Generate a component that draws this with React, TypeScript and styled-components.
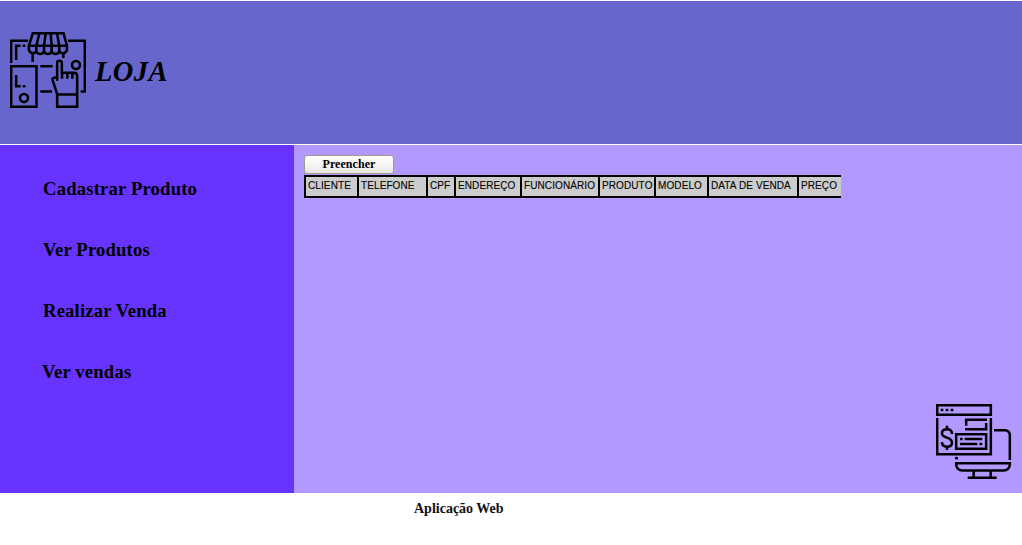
import React from "react";
import styled, { createGlobalStyle } from "styled-components";

const GlobalStyle = createGlobalStyle`
  * { box-sizing: border-box; }
  body { margin: 0; background: #fff; color: #000; font-family: "Liberation Serif", "Times New Roman", serif; }
`;

const Page = styled.div`
  height: 545px;
  padding-top: 1px;
  display: flex;
  flex-direction: column;
  overflow: hidden;
`;

const Header = styled.header`
  height: 143px;
  flex: none;
  background: #6666cc;
  display: flex;
  align-items: center;
  gap: 9px;
  padding: 0 10px 5px;
`;

const Title = styled.h1`
  margin: 4px 0 0;
  font-size: 28.5px;
  line-height: 34px;
  font-style: italic;
  letter-spacing: 0.4px;
`;

const Icon = styled.svg`
  width: 76px;
  height: 76px;
  flex: none;
  fill: none;
  stroke: #000;
  stroke-width: 7.6;
`;

const Body = styled.div`
  height: 348px;
  flex: none;
  margin-top: 1px;
  display: flex;
`;

const Sidebar = styled.nav`
  width: 294px;
  background: #6633ff;
  padding: 33px 0 0 43px;
  display: flex;
  flex-direction: column;
  gap: 39px;
`;

const MenuLink = styled.a<{ $shift?: number }>`
  font-size: 18.72px;
  line-height: 22px;
  font-weight: bold;
  letter-spacing: 0.15px;
  white-space: nowrap;
  margin-left: ${(p) => p.$shift ?? 0}px;
`;

const Main = styled.main`
  flex: 1;
  background: #b399ff;
  padding: 10px 10px 13px;
  display: flex;
  flex-direction: column;
  align-items: flex-start;
`;

const Button = styled.button`
  width: 90px;
  height: 19px;
  padding: 0;
  border: 1px solid #a39a8c;
  border-radius: 3px;
  background: linear-gradient(#fff, #f5f5f5 50%, #e6e6e6);
  font: bold 12px/17px "Liberation Serif", serif;
  letter-spacing: 0.06px;
  color: #000;
`;

const Table = styled.div`
  display: flex;
  height: 23px;
  margin-top: 1px;
  border: solid #000;
  border-width: 2px 0;
  background: #ccc;
`;

const HeadCell = styled.div<{ $width: number }>`
  width: ${(p) => p.$width}px;
  border-left: 2px solid #000;
  padding: 2px 0 0 2px;
  font: 10px/13px "Liberation Sans", Arial, sans-serif;
  letter-spacing: 0.1px;
  white-space: nowrap;
  -webkit-text-stroke: 0.1px #000;
`;

const Corner = styled.div`
  margin-top: auto;
  align-self: flex-end;
  display: flex;
`;

const Footer = styled.footer`
  padding: 7px 0 0 414px;
  font-size: 14px;
  line-height: 17px;
  font-weight: bold;
  color: #111;
`;

const columns: [string, number][] = [
  ["CLIENTE", 53],
  ["TELEFONE", 69],
  ["CPF", 28],
  ["ENDEREÇO", 66],
  ["FUNCIONÁRIO", 78],
  ["PRODUTO", 56],
  ["MODELO", 53],
  ["DATA DE VENDA", 90],
  ["PREÇO", 44],
];

const ShopIcon = () => (
  <Icon viewBox="30 36 228 228">
    <path d="M33.500 129V62.500H84M204 62.500H254.500V214.500H242" />
    <path d="M48.500 120V77.500H62M68 77.500H76" />
    <path d="M98.500 39.500H190.500L201 78V88A13 13 0 0 1 178 95A13 13 0 0 1 155 95A13 13 0 0 1 132 95A13 13 0 0 1 109 95A13 13 0 0 1 86.500 88V78Z" />
    <path d="M86 77.500H202M109 94V78L118 40M132 94V78L137 40M155 94V78L152 40M178 94V78L171 40" />
    <path d="M98 100V126M190 100V114" />
    <path d="M33.500 138.500H109.500V260.500H33.500Z" />
    <path d="M48.500 165V198.500H62M68 198.500H76" />
    <circle cx="72" cy="234" r="12" />
    <circle cx="228" cy="135" r="12" />
    <path d="M121 138.500H158M121 214.500H156" />
    <path d="M171.500 260V222L158 181Q156 174 163 173L171.500 171M171.500 182V129Q171.500 122.500 178.500 122.500T185.500 129V158.500H222Q231.500 159 231.500 168V260.500H168M168 223.500H232M186 158V176M202 158V176M217 158V176" />
  </Icon>
);

const CheckoutIcon = () => (
  <Icon viewBox="33 27 228 228">
    <path d="M36.500 30.500H197.500V59.500H36.500Z" />
    <path d="M47 45H55M62 45H70M77 45H85" />
    <path d="M36.500 69V177.500H197.500V69" />
    <path d="M123.500 92V74.500H186M120 102.500H183.500V84" />
    <path d="M93.500 117.500H183.500V161.500H93.500Z" />
    <path d="M105 132H113M119 132H172M105 147H157M163 147H172" />
    <path d="M81 117Q81 103 66 103Q51 103 51 115Q51 124 66 128Q81 133 81 143Q81 155 66 155Q51 155 51 141M66 92V104M66 154V165" />
    <path d="M207 105.500H239Q254.500 106 254.500 121V195" />
    <path d="M90 189.500H99" />
    <path d="M93.500 204.500H254.500V209Q252 226.500 236 226.500H112Q96 226.500 93.500 209Z" />
    <path d="M146 228V247M197 228V247M128 248.500H215" />
  </Icon>
);

export default function App() {
  return (
    <Page>
      <GlobalStyle />
      <Header>
        <ShopIcon />
        <Title>LOJA</Title>
      </Header>
      <Body>
        <Sidebar>
          <MenuLink>Cadastrar Produto</MenuLink>
          <MenuLink>Ver Produtos</MenuLink>
          <MenuLink>Realizar Venda</MenuLink>
          <MenuLink $shift={-1}>Ver vendas</MenuLink>
        </Sidebar>
        <Main>
          <Button>Preencher</Button>
          <Table>
            {columns.map(([label, width]) => (
              <HeadCell key={label} $width={width}>{label}</HeadCell>
            ))}
          </Table>
          <Corner>
            <CheckoutIcon />
          </Corner>
        </Main>
      </Body>
      <Footer>Aplicação Web</Footer>
    </Page>
  );
}
